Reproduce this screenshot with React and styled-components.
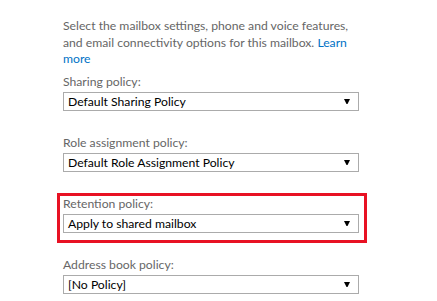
import React from "react";
import styled, { createGlobalStyle } from "styled-components";

const GlobalStyle = createGlobalStyle`
  html, body {
    margin: 0;
    padding: 0;
    background: #ffffff;
  }
  body {
    font-family: "Segoe UI", Lato, "Open Sans", sans-serif;
  }
`;

const Page = styled.div`
  width: 437px;
  height: 301px;
  overflow: hidden;
  padding: 18px 0 0 63px;
  box-sizing: border-box;
`;

const Column = styled.div`
  width: 296px;
  display: flex;
  flex-direction: column;
`;

const Intro = styled.p`
  margin: 0 0 6px;
  font-size: 12.2px;
  line-height: 16.5px;
  color: #666666;
`;

const LearnMore = styled.a`
  color: #0072c6;
  text-decoration: none;
`;

const Field = styled.div`
  display: flex;
  flex-direction: column;
  gap: 2px;
  margin-bottom: ${({ $last }) => ($last ? "0" : "24px")};
`;

const Highlight = styled.div`
  margin: -3px -8px 14px -6px;
  padding: 0 5px 7px 3px;
  border: 3px solid #e81123;
  ${Field} {
    margin-bottom: 0;
  }
`;

const Label = styled.label`
  font-size: 12.2px;
  line-height: 16px;
  color: #666666;
`;

const SelectBox = styled.div`
  height: 19px;
  border: 1px solid #ababab;
  box-sizing: border-box;
  display: flex;
  align-items: center;
  justify-content: space-between;
  padding: 0 8px 0 4px;
  font-size: 12.2px;
  color: #000000;
  background: #ffffff;
`;

const Arrow = styled.svg`
  width: 6px;
  height: 5px;
  flex-shrink: 0;
`;

const PolicySelect = ({ label, value, last }) => (
  <Field $last={last}>
    <Label>{label}</Label>
    <SelectBox>
      <span>{value}</span>
      <Arrow viewBox="0 0 6 5">
        <path d="M0 0 H6 L3.5 5 H2.5 Z" fill="#000" />
      </Arrow>
    </SelectBox>
  </Field>
);

const App = () => (
  <Page>
    <GlobalStyle />
    <Column>
      <Intro>
        Select the mailbox settings, phone and voice features, and email
        connectivity options for this mailbox. <LearnMore href="#">Learn more</LearnMore>
      </Intro>
      <PolicySelect label="Sharing policy:" value="Default Sharing Policy" />
      <PolicySelect label="Role assignment policy:" value="Default Role Assignment Policy" />
      <Highlight>
        <PolicySelect label="Retention policy:" value="Apply to shared mailbox" />
      </Highlight>
      <PolicySelect label="Address book policy:" value="[No Policy]" last />
    </Column>
  </Page>
);

export default App;
